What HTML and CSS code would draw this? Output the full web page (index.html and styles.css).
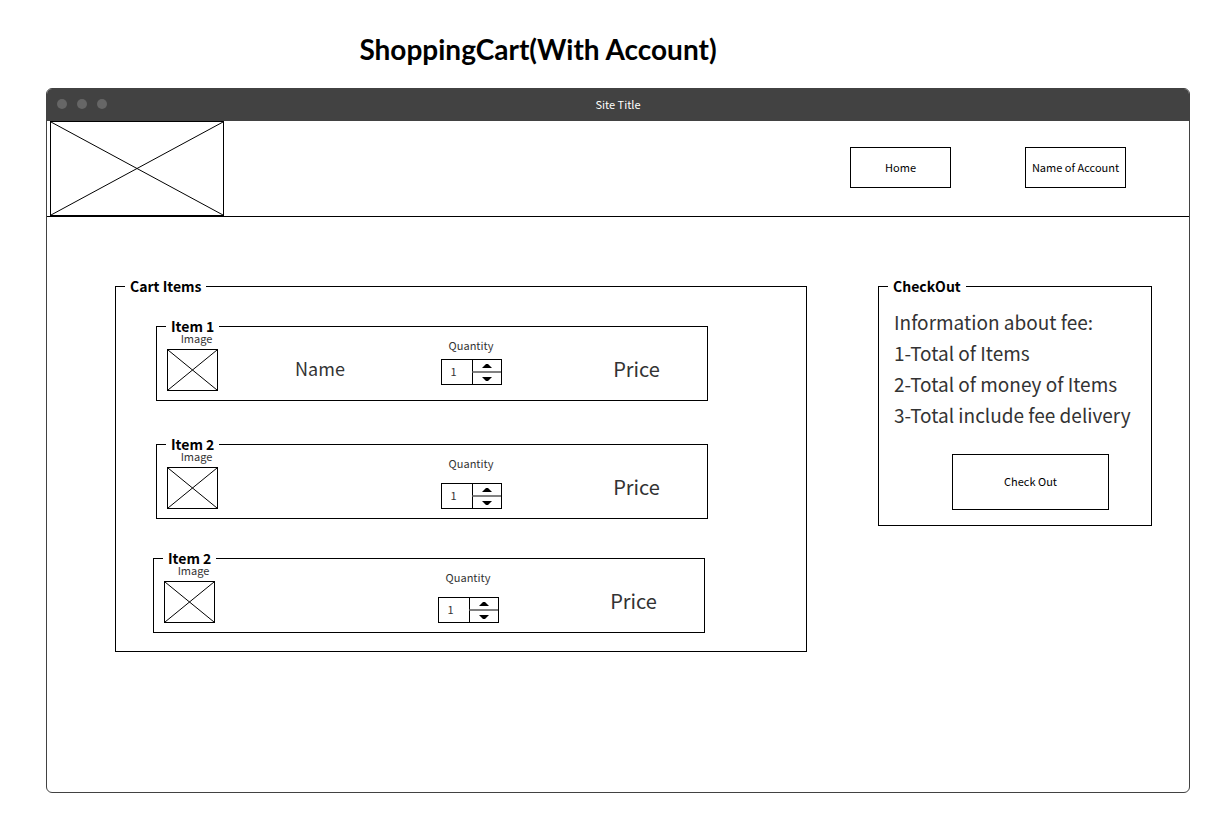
FILE: index.html
```html
<!DOCTYPE html>
<html lang="en">
<head>
<meta charset="utf-8">
<title>ShoppingCart(With Account)</title>
<link rel="stylesheet" href="styles.css">
</head>
<body>
<div class="page">
  <h1 class="page-title">ShoppingCart(With Account)</h1>
  <div class="window">
    <div class="titlebar">
      <div class="dots"><span class="dot"></span><span class="dot"></span><span class="dot"></span></div>
      <span>Site Title</span>
    </div>
    <header class="header">
      <svg class="placeholder logo" viewBox="0 0 100 100" preserveAspectRatio="none" role="img" aria-label="Logo"><path d="M0 0 100 100M0 100 100 0"/></svg>
      <nav class="nav">
        <button class="button nav-button" type="button">Home</button>
        <button class="button nav-button" type="button">Name of Account</button>
      </nav>
    </header>
    <main class="main">
      <fieldset class="panel cart">
        <legend class="legend">Cart Items</legend>
        <fieldset class="panel item">
          <legend class="legend">Item 1</legend>
          <div class="item-row">
            <figure class="thumb">
              <figcaption class="thumb-label">Image</figcaption>
              <svg class="placeholder thumb-box" viewBox="0 0 100 100" preserveAspectRatio="none" aria-hidden="true"><path d="M0 0 100 100M0 100 100 0"/></svg>
            </figure>
            <span class="value value-name">Name</span>
            <div class="quantity">
              <label for="qty1">Quantity</label>
              <div class="stepper">
                <input class="stepper-input" id="qty1" type="text" inputmode="numeric" value="1">
                <button class="step" type="button" aria-label="Increase"><svg class="arrow" viewBox="0 0 10 4"><path d="M0 4 4 0H6L10 4Z"/></svg></button>
                <button class="step step-down" type="button" aria-label="Decrease"><svg class="arrow" viewBox="0 0 10 4"><path d="M0 0H10L6 4H4Z"/></svg></button>
              </div>
            </div>
            <span class="value">Price</span>
          </div>
        </fieldset>
        <fieldset class="panel item item-loose">
          <legend class="legend">Item 2</legend>
          <div class="item-row">
            <figure class="thumb">
              <figcaption class="thumb-label">Image</figcaption>
              <svg class="placeholder thumb-box" viewBox="0 0 100 100" preserveAspectRatio="none" aria-hidden="true"><path d="M0 0 100 100M0 100 100 0"/></svg>
            </figure>
            <span class="value value-name"></span>
            <div class="quantity">
              <label for="qty2">Quantity</label>
              <div class="stepper">
                <input class="stepper-input" id="qty2" type="text" inputmode="numeric" value="1">
                <button class="step" type="button" aria-label="Increase"><svg class="arrow" viewBox="0 0 10 4"><path d="M0 4 4 0H6L10 4Z"/></svg></button>
                <button class="step step-down" type="button" aria-label="Decrease"><svg class="arrow" viewBox="0 0 10 4"><path d="M0 0H10L6 4H4Z"/></svg></button>
              </div>
            </div>
            <span class="value">Price</span>
          </div>
        </fieldset>
        <fieldset class="panel item item-loose item-last">
          <legend class="legend">Item 2</legend>
          <div class="item-row">
            <figure class="thumb">
              <figcaption class="thumb-label">Image</figcaption>
              <svg class="placeholder thumb-box" viewBox="0 0 100 100" preserveAspectRatio="none" aria-hidden="true"><path d="M0 0 100 100M0 100 100 0"/></svg>
            </figure>
            <span class="value value-name"></span>
            <div class="quantity">
              <label for="qty3">Quantity</label>
              <div class="stepper">
                <input class="stepper-input" id="qty3" type="text" inputmode="numeric" value="1">
                <button class="step" type="button" aria-label="Increase"><svg class="arrow" viewBox="0 0 10 4"><path d="M0 4 4 0H6L10 4Z"/></svg></button>
                <button class="step step-down" type="button" aria-label="Decrease"><svg class="arrow" viewBox="0 0 10 4"><path d="M0 0H10L6 4H4Z"/></svg></button>
              </div>
            </div>
            <span class="value">Price</span>
          </div>
        </fieldset>
      </fieldset>
      <fieldset class="panel checkout">
        <legend class="legend">CheckOut</legend>
        <div class="fees">
          <p class="fee">Information about fee:</p>
          <p class="fee">1-Total of Items</p>
          <p class="fee">2-Total of money of Items</p>
          <p class="fee">3-Total include fee delivery</p>
        </div>
        <button class="button checkout-button" type="button">Check Out</button>
      </fieldset>
    </main>
  </div>
</div>
</body>
</html>
```
FILE: styles.css
```css
*, *::before, *::after { box-sizing: border-box; }

body {
  margin: 0;
  background: #fff;
  color: #333;
  font-family: "Noto Sans CJK SC", "Noto Sans", sans-serif;
  font-size: 11px;
  line-height: 16px;
}

.page {
  display: flex;
  flex-direction: column;
  min-height: 100vh;
  padding: 0 36px 22px 46px;
}

.page-title {
  margin: 0;
  padding: 31px 160px 21px 0;
  color: #000;
  font-family: Lato, sans-serif;
  font-size: 28px;
  font-weight: 700;
  line-height: 36px;
  text-align: center;
}

.window {
  flex: 1;
  border: 1px solid #424242;
  border-radius: 6px;
  overflow: hidden;
}

.titlebar {
  display: grid;
  grid-template-columns: 1fr auto 1fr;
  align-items: center;
  height: 32px;
  padding: 0 10px 3px;
  background: #424242;
  color: #fff;
}

.dots { display: flex; gap: 10px; }

.dot {
  width: 10px;
  height: 10px;
  border-radius: 50%;
  background: #666;
}

.header {
  display: flex;
  justify-content: space-between;
  align-items: flex-start;
  padding: 0 63px 0 3px;
  border-bottom: 1px solid #000;
}

.placeholder {
  display: block;
  border: 1px solid #000;
}

.placeholder path {
  fill: none;
  stroke: #000;
  stroke-width: 1;
  vector-effect: non-scaling-stroke;
}

.logo { width: 174px; height: 95px; }

.nav { display: flex; gap: 74px; padding-top: 26px; }

.button {
  padding: 0 0 2px;
  border: 1px solid #000;
  background: #fff;
  color: #000;
  font: inherit;
}

.nav-button { width: 101px; height: 41px; }

.main {
  display: grid;
  grid-template-columns: 692fr 274fr;
  gap: 71px;
  align-items: start;
  padding: 65px 37px 40px 68px;
}

.panel {
  min-width: 0;
  margin: 0;
  padding: 0 0 0 9px;
  border: 1px solid #000;
}

/* A short line box lets the content start close under the top rule. */
.legend {
  padding: 0 5px;
  color: #000;
  font-size: 14px;
  font-weight: 700;
  line-height: 9px;
}

.cart { padding: 31px 98px 18px 9px; }

.item { margin-left: 31px; }

.item + .item { margin-top: 39px; }

.item + .item-last { margin: 35px 3px 0 28px; }

.item-row {
  display: grid;
  grid-template-columns: 98px 112fr 190fr 141fr;
  padding-bottom: 9px;
}

.thumb { margin: 0 0 0 1px; width: 51px; }

.thumb-label {
  padding-left: 8px;
  margin-bottom: 4px;
  line-height: 14px;
  text-align: center;
}

.thumb-box { width: 51px; height: 42px; }

.value {
  padding-top: 22px;
  font-size: 20px;
  line-height: 31px;
  text-align: center;
}

.value-name { font-size: 18px; }

.quantity {
  display: flex;
  flex-direction: column;
  align-items: center;
  gap: 6px;
  padding-top: 6px;
}

.item-loose .quantity { gap: 12px; }

.stepper {
  display: grid;
  grid-template-columns: 30px 1fr;
  grid-template-rows: 1fr 1fr;
  width: 61px;
  height: 26px;
  border: 1px solid #000;
}

.stepper-input {
  grid-row: 1 / 3;
  min-width: 0;
  width: 100%;
  padding: 0 0 2px 9px;
  border: 0;
  background: #fff;
  color: #333;
  font: inherit;
}

.step {
  display: flex;
  justify-content: center;
  align-items: center;
  padding: 0;
  border: 0;
  border-left: 1px solid #000;
  border-bottom: 1px solid #808080;
  background: #fff;
}

.step-down {
  border-top: 1px solid #808080;
  border-bottom: 0;
}

.arrow { width: 10px; height: 4px; }

.checkout {
  display: flex;
  flex-direction: column;
  padding: 15px 0 15px 9px;
}

.fees { padding-left: 6px; }

.fee {
  margin: 0;
  font-size: 19px;
  line-height: 31px;
  white-space: nowrap;
}

.checkout-button {
  align-self: flex-end;
  width: 157px;
  height: 56px;
  margin: 24px 42px 0 0;
}
```
